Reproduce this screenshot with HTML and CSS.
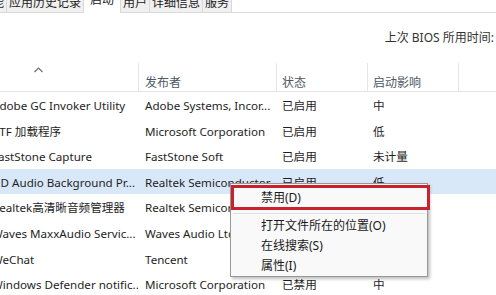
FILE: index.html
```html
<!DOCTYPE html>
<html lang="zh-CN">
<head>
    <meta charset="UTF-8">
    <title>任务管理器 - 启动</title>
    <link rel="stylesheet" href="styles.css">
</head>
<body>

<div class="tabs">
    <div class="tab">性能</div>
    <div class="tab">应用历史记录</div>
    <div class="tab active">启动</div>
    <div class="tab">用户</div>
    <div class="tab">详细信息</div>
    <div class="tab">服务</div>
</div>

<div class="bios">上次 BIOS 所用时间:</div>

<div class="list">
    <div class="list-head">
        <div class="col col-name">
            <svg class="sort-caret" width="9" height="6" viewBox="0 0 9 6">
                <path d="M0.5 5 L4.5 1 L8.5 5" fill="none" stroke="#6d6d6d" stroke-width="1.2"/>
            </svg>
        </div>
        <div class="col col-pub">发布者</div>
        <div class="col col-status">状态</div>
        <div class="col col-impact">启动影响</div>
        <div class="col col-rest"></div>
    </div>

    <div class="row">
        <div class="col col-name">Adobe GC Invoker Utility</div>
        <div class="col col-pub">Adobe Systems, Incor...</div>
        <div class="col col-status">已启用</div>
        <div class="col col-impact">中</div>
    </div>
    <div class="row">
        <div class="col col-name">CTF 加载程序</div>
        <div class="col col-pub">Microsoft Corporation</div>
        <div class="col col-status">已启用</div>
        <div class="col col-impact">低</div>
    </div>
    <div class="row">
        <div class="col col-name">FastStone Capture</div>
        <div class="col col-pub">FastStone Soft</div>
        <div class="col col-status">已启用</div>
        <div class="col col-impact">未计量</div>
    </div>
    <div class="row selected">
        <div class="col col-name">HD Audio Background Pr...</div>
        <div class="col col-pub">Realtek Semiconductor</div>
        <div class="col col-status">已启用</div>
        <div class="col col-impact">低</div>
    </div>
    <div class="row">
        <div class="col col-name">Realtek高清晰音频管理器</div>
        <div class="col col-pub">Realtek Semiconductor</div>
        <div class="col col-status">已启用</div>
        <div class="col col-impact">低</div>
    </div>
    <div class="row">
        <div class="col col-name">Waves MaxxAudio Servic...</div>
        <div class="col col-pub">Waves Audio Ltd.</div>
        <div class="col col-status">已启用</div>
        <div class="col col-impact">低</div>
    </div>
    <div class="row">
        <div class="col col-name">WeChat</div>
        <div class="col col-pub">Tencent</div>
        <div class="col col-status">已启用</div>
        <div class="col col-impact">高</div>
    </div>
    <div class="row">
        <div class="col col-name">Windows Defender notific...</div>
        <div class="col col-pub">Microsoft Corporation</div>
        <div class="col col-status">已禁用</div>
        <div class="col col-impact">中</div>
    </div>

    <!-- 右键菜单 -->
    <div class="context-menu">
        <div class="menu-item">禁用(D)</div>
        <div class="menu-sep"></div>
        <div class="menu-item">打开文件所在的位置(O)</div>
        <div class="menu-item">在线搜索(S)</div>
        <div class="menu-item">属性(I)</div>
        <div class="mark"></div>
    </div>
</div>

</body>
</html>
```

FILE: styles.css
```css
body {
    font-family: "Noto Sans", "Noto Sans CJK SC", sans-serif;
    font-size: 12px;
    color: #1e1e1e;
    background: white;
    margin: 0;
    padding: 0;
    width: 496px;
    height: 295px;
    overflow: hidden;
}

/* tabs */
.tabs {
    display: flex;
    align-items: flex-end;
    height: 22px;
    margin-top: -10px;
    margin-left: -22px;
    border-bottom: 1px solid #d9d9d9;
}
.tab {
    height: 21px;
    line-height: 23px;
    padding: 0 2px;
    background-color: #f0f0f0;
    border: 1px solid #d9d9d9;
    border-bottom: none;
    border-left: none;
    color: #222;
}
.tab.active {
    height: 24px;
    line-height: 22px;
    padding: 0 6px;
    background-color: white;
    margin-bottom: -1px;
    position: relative;
}

.bios {
    height: 50px;
    line-height: 50px;
    text-align: right;
    padding-right: 2px;
    color: #333;
}

/* list */
.list {
    position: relative;
    margin-left: -15px;
}
.list-head,
.row {
    display: grid;
    grid-template-columns: 154px 138px 91px 91px 1fr;
}
.list-head {
    height: 28px;
    border-bottom: 1px solid #e5e5e5;
}
.list-head .col {
    border-right: 1px solid #e5e5e5;
    display: flex;
    align-items: flex-end;
    padding-bottom: 0;
    line-height: 16px;
    color: #4d5966;
}
.list-head .col-rest {
    border-right: none;
}
.list-head .col-name {
    align-items: flex-start;
    padding-top: 4px;
}
.sort-caret {
    margin-left: 42px;
}

.col {
    white-space: nowrap;
    overflow: hidden;
    box-sizing: border-box;
}
.col-name { padding-left: 7px; }
.col-pub { padding-left: 6px; }
.col-status { padding-left: 5px; }
.col-impact { padding-left: 5px; }

.row {
    height: 25.6px;
    line-height: 27px;
    font-size: 11.6px;
}
.row.selected {
    background-color: #d9e8f9;
}

/* context menu */
.context-menu {
    position: absolute;
    left: 245px;
    top: 120px;
    width: 196px;
    padding: 3px 0 0;
    background: #f9f9f9;
    border: 1px solid #979797;
    box-shadow: 2px 2px 3px rgba(0, 0, 0, 0.25);
}
.menu-item {
    height: 20px;
    line-height: 20px;
    padding-left: 30px;
    color: #1a1a1a;
}
.menu-item:first-child {
    height: 22px;
    line-height: 22px;
}
.menu-sep {
    height: 1px;
    background: #e0e0e0;
    margin: 4px 2px 2px;
}
.mark {
    position: absolute;
    left: 0;
    top: 1px;
    width: 199px;
    height: 25px;
    border: 3px solid #c8232c;
    box-sizing: border-box;
}
```
